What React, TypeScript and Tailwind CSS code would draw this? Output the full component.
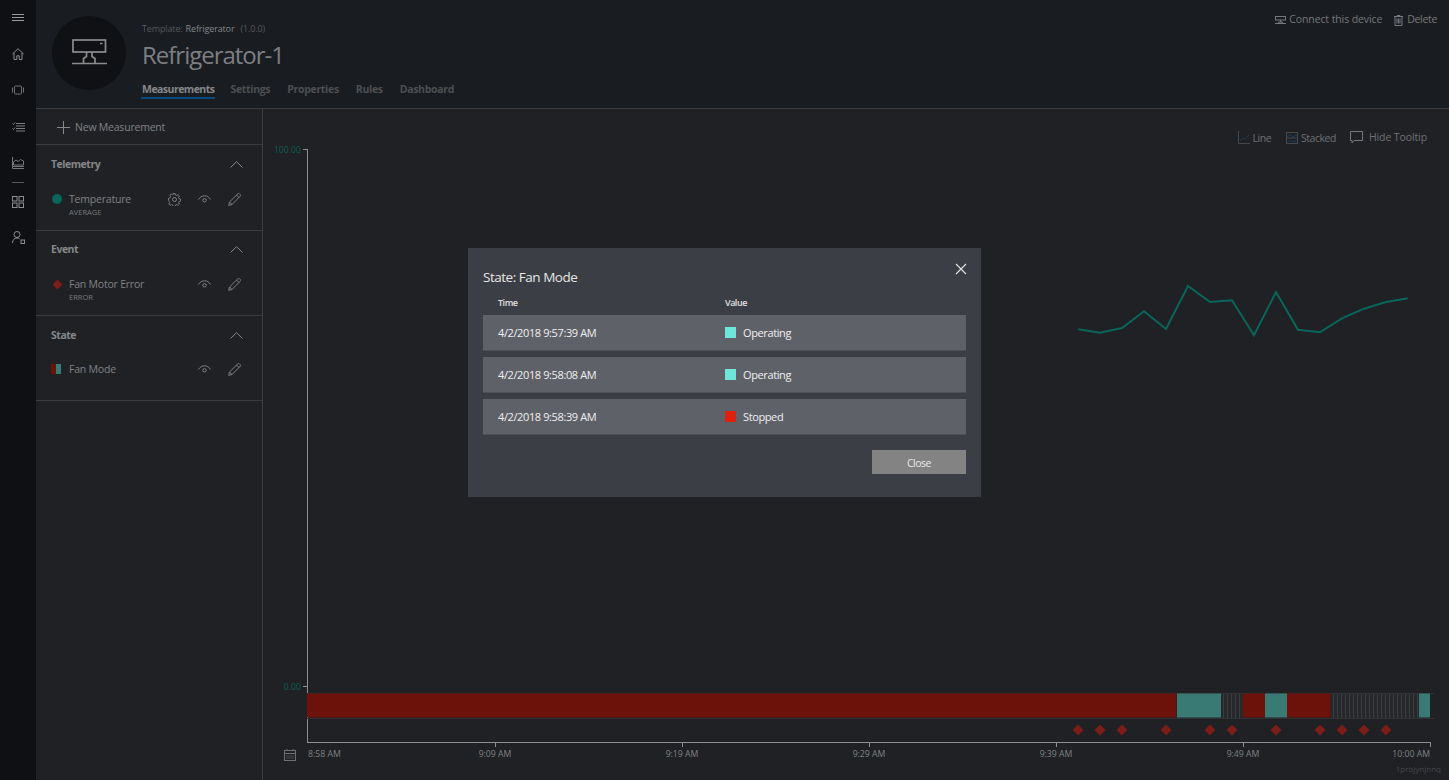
import React from "react";

const font = { fontFamily: '"Open Sans", "Noto Sans", sans-serif' };

function I({ children, w = 16, h = 16, vb, color = "#8b8d90", sw = 1 }: { children: React.ReactNode; w?: number; h?: number; vb?: string; color?: string; sw?: number }) {
  return (
    <svg width={w} height={h} viewBox={vb ?? `0 0 ${w} ${h}`} fill="none" stroke={color} strokeWidth={sw} className="shrink-0">
      {children}
    </svg>
  );
}

const Hamburger = () => <I w={12} h={8} color="#9a9a9a"><path d="M0 .5h12M0 3.5h12M0 6.5h12" /></I>;
const Home = () => <I w={12} h={12}><path d="M.5 6 6 .7 11.5 6M2 5v6.5h2.800V7.800h2.400v3.700H10V5" /></I>;
const Device = () => <I w={12} h={10} color="#6f7174"><rect x="2.5" y="1" width="7" height="8" rx="1" /><path d="M.5 2.5v5M11.5 2.500v5" /></I>;
const Tasks = () => <I w={13} h={10} color="#7b7d80"><path d="M4 1.5h9M4 4h9M4 6.5h9M4 9h9M.5 1.500l1 1 1.500-2M.5 6.500l1 1 1.500-2" /></I>;
const ChartI = () => <I w={12} h={12} color="#75777a"><path d="M.5 0v11.500H12M.5 9.500H12" /><path d="M1.5 8V5l2.500-2 2 1.500L8.500 2.500 11.500 4v4z" /></I>;
const Grid = () => <I w={12} h={12}><rect x=".5" y=".5" width="4.500" height="4.500" /><rect x="7" y=".5" width="4.500" height="4.500" /><rect x=".5" y="7" width="4.500" height="4.500" /><rect x="7" y="7" width="4.500" height="4.500" /></I>;
const User = () => <I w={13} h={13}><circle cx="5" cy="3.500" r="3" /><path d="M.5 12c0-3 2-5 4.500-5 1 0 1.700.2 2.500.8" /><rect x="9" y="9" width="3.500" height="3.500" /></I>;

const BigDevice = () => (
  <I w={36} h={28} color="#8c8c8c" sw={1.7}>
    <rect x="2" y="1" width="32.500" height="12" />
    <path d="M29 4.500h2.500M15.500 13v4.500l-3 2v5M21 13v4.500l3 2v5M1 24.500h35" />
  </I>
);
const SmallDevice = () => <I w={11} h={9} color="#77797c"><rect x=".5" y=".5" width="10" height="3.500" /><path d="M5.500 4v2M3.500 8V6h4v2M0 7.500h11" /></I>;
const Trash = () => <I w={9} h={11} color="#77797c"><path d="M0 1.500h9M3 1.500V.5h3v1M1 1.500v9h7v-9M3 3.500v5M4.500 3.500v5M6 3.500v5" /></I>;
const Plus = () => <I w={13} h={13} color="#85878a"><path d="M6.500 0v13M0 6.500h13" /></I>;
const Chevron = () => <I w={13} h={7} color="#85878a"><path d="M.5 6.500 6.500.7l6 5.800" /></I>;
const Eye = () => <I w={13} h={8} color="#7f8184"><path d="M.5 4.500C2 2 4 .8 6.500.8s4.500 1.200 6 3.700" /><circle cx="6.500" cy="5.300" r="1.700" /></I>;
const Pencil = () => <I w={13} h={13} color="#7f8184"><path d="M.7 12.300 1.500 9 9.800.8c.6-.5 1.200-.5 1.700 0l.7.7c.5.500.5 1.100 0 1.700L4 11.500zM1.500 9 4 11.500M8.500 2l2.500 2.500" /></I>;
const Gear = () => (
  <I w={13} h={13} color="#7f8184">
    <circle cx="6.500" cy="6.500" r="2" />
    <path d="M5.500.5h2l.4 1.700 1.400.6 1.500-.9 1.400 1.400-.9 1.500.6 1.400 1.600.4v2l-1.600.4-.6 1.400.9 1.500-1.400 1.400-1.500-.9-1.400.6-.4 1.600h-2l-.4-1.600-1.400-.6-1.500.9-1.400-1.400.9-1.500-.6-1.400L.5 7.600v-2l1.600-.4.6-1.400-.9-1.500 1.400-1.400 1.500.9 1.400-.6z" transform="scale(.93) translate(.1 0)" />
  </I>
);

function Item({ marker, name, sub, gear }: { marker: React.ReactNode; name: string; sub?: string; gear?: boolean }) {
  return (
    <div className="flex items-start pl-[15px] pr-[21px]">
      <div className="flex h-[16px] w-[18px] shrink-0 items-center">{marker}</div>
      <div className="flex-1">
        <div className="text-[10.5px] leading-[16px] tracking-[-0.02em] text-[#808285]">{name}</div>
        {sub && <div className="text-[7.5px] leading-[10px] tracking-normal text-[#77797c]">{sub}</div>}
      </div>
      <div className="flex h-[16px] items-center">
        {gear && <div className="mr-[17px]"><Gear /></div>}
        <div className="mr-[17px]"><Eye /></div>
        <Pencil />
      </div>
    </div>
  );
}

function Section({ title, children, h, headH, gap }: { title: string; children: React.ReactNode; h: string; headH: string; gap: string }) {
  return (
    <div className={`${h} border-b border-[#3a3c40]`}>
      <div className={`flex items-center justify-between pl-[15px] pr-[19px] ${headH}`}>
        <span className="text-[10.5px] font-bold text-[#85878a]">{title}</span>
        <span className="mb-[2px]"><Chevron /></span>
      </div>
      <div className={gap}>{children}</div>
    </div>
  );
}

const rows: [string, string, string][] = [
  ["4/2/2018 9:57:39 AM", "Operating", "#6ee7da"],
  ["4/2/2018 9:58:08 AM", "Operating", "#6ee7da"],
  ["4/2/2018 9:58:39 AM", "Stopped", "#e02110"],
];

const linePts = "1078.300,329.300 1100,332.700 1122,328 1144,311.300 1166,329 1188,286 1210,302 1232,300.300 1254,335.300 1276,292 1298,329.700 1320,332.300 1342,318.300 1364,308.700 1386,302 1407.700,298.300";
const diamonds = [1078, 1100, 1122, 1166, 1210, 1232, 1276, 1320, 1342, 1364, 1386];
const segs: [number, number, string][] = [
  [307, 1176.500, "#6c120a"],
  [1177, 1221, "#3a7a74"],
  [1243, 1265, "#6c120a"],
  [1265, 1287, "#3a7a74"],
  [1287, 1330.500, "#6c120a"],
  [1419, 1430, "#3a7a74"],
];
const stripes = [[1221, 1243], [1331, 1419]] as const;
const xTicks: [number, string, "start" | "middle" | "end"][] = [
  [308, "8:58 AM", "start"],
  [495, "9:09 AM", "middle"],
  [682, "9:19 AM", "middle"],
  [869, "9:29 AM", "middle"],
  [1056, "9:39 AM", "middle"],
  [1243, "9:49 AM", "middle"],
  [1430, "10:00 AM", "end"],
];

function Chart() {
  const lines: number[] = [];
  for (const [a, b] of stripes) for (let x = a + 2; x < b; x += 4) lines.push(x);
  return (
    <svg className="absolute left-0 top-0 tracking-normal" width="1186" height="671" viewBox="263 109 1186 671" style={font}>
      <g stroke="#8e8e8e" strokeWidth="1">
        <path d="M307.500 149v594M303 149.500h4M303 686.500h4M307 742.500h1124" />
        {xTicks.slice(1).map(([x]) => <path key={x} d={`M${x + 0.5} 743v4`} />)}
      </g>
      <text x="301" y="153" textAnchor="end" fontSize="8.700" fill="#0c5f52">100.00</text>
      <text x="301" y="690" textAnchor="end" fontSize="8.700" fill="#0c5f52">0.00</text>
      <polyline points={linePts} fill="none" stroke="#08665a" strokeWidth="2" />
      <path d="M307 693.500h1127M307 718.500h1127" stroke="#2f3134" strokeWidth="1" />
      {stripes.map(([a, b]) => <rect key={a} x={a} y="694" width={b - a} height="24" fill="#26282b" />)}
      {lines.map((x) => <path key={x} d={`M${x + 0.5} 694v24`} stroke="#393b3e" strokeWidth="1" />)}
      {segs.map(([a, b, c]) => <rect key={a} x={a} y="693.500" width={b - a} height="24" fill={c} />)}
      {diamonds.map((x) => <path key={x} d={`M${x} 724.500l5.500 5.500-5.500 5.500-5.500-5.500z`} fill="#7b1d19" />)}
      {xTicks.map(([x, t, a]) => <text key={t} x={x} y="757" textAnchor={a} fontSize="8.700" fill="#7f8184">{t}</text>)}
      <text x="1441" y="772" textAnchor="end" fontSize="8" fill="#45474a">1prbjynjnnq</text>
      <g stroke="#6f7174" fill="none">
        <rect x="284.500" y="750.500" width="11" height="10" />
        <path d="M284.500 753.500h11M287 749v2M293 749v2" />
        <path d="M286.500 756h7M286.500 758h7" strokeDasharray="1 1" />
      </g>
    </svg>
  );
}

export default function App() {
  return (
    <div className="relative flex h-[780px] w-[1449px] overflow-hidden bg-[#1f2125] tracking-[-0.03em]" style={font}>
      <nav className="flex w-[36px] shrink-0 flex-col items-center bg-[#0e1013]">
        <div className="mt-[14px]"><Hamburger /></div>
        <div className="mt-[26px]"><Home /></div>
        <div className="mt-[25px]"><Device /></div>
        <div className="mt-[27px]"><Tasks /></div>
        <div className="mt-[25px]"><ChartI /></div>
        <div className="mt-[13px] h-px w-[12px] bg-[#55575a]" />
        <div className="mt-[13px]"><Grid /></div>
        <div className="mt-[23px]"><User /></div>
      </nav>
      <div className="flex min-w-0 flex-1 flex-col">
        <header className="relative flex h-[109px] shrink-0 border-b border-[#3a3c40] bg-[#191c21]">
          <div className="ml-[16px] mt-[16px] flex h-[74px] w-[74px] items-center justify-center rounded-full bg-[#0f1114]">
            <BigDevice />
          </div>
          <div className="ml-[16px] flex-1">
            <div className="mt-[23px] flex text-[9px] leading-[12px] tracking-[-0.015em] text-[#55575a]">
              <span>Template:</span>
              <span className="ml-[3px] text-[#85878a]">Refrigerator</span>
              <span className="ml-[6px]">(1.0.0)</span>
            </div>
            <div className="mt-[4px] text-[24px] leading-[32px] tracking-[-0.042em] text-[#7d7f82]">Refrigerator-1</div>
            <div className="-ml-[1px] mt-[10px] flex text-[10.5px] font-bold leading-[16px] tracking-[-0.03em] text-[#4d4f52]">
              <span className="h-[18px] border-b-2 border-[#0b4a80] px-px tracking-[-0.05em] text-[#85878a]">Measurements</span>
              <span className="ml-[15px]">Settings</span>
              <span className="ml-[17px]">Properties</span>
              <span className="ml-[17px]">Rules</span>
              <span className="ml-[17px]">Dashboard</span>
            </div>
          </div>
          <div className="mr-[12px] mt-[13px] flex h-[14px] items-center text-[10.5px] tracking-[-0.01em] text-[#77797c]">
            <SmallDevice />
            <span className="ml-[3px]">Connect this device</span>
            <span className="ml-[12px]"><Trash /></span>
            <span className="ml-[4px] tracking-[-0.03em]">Delete</span>
          </div>
        </header>
        <div className="flex min-h-0 flex-1">
          <aside className="w-[227px] shrink-0 border-r border-[#3a3c40]">
            <div className="flex h-[36px] items-center border-b border-[#3a3c40] pl-[21px] pt-[1px] text-[10.5px] tracking-[-0.02em] text-[#808285]">
              <Plus />
              <span className="ml-[5px] mt-[1px]">New Measurement</span>
            </div>
            <Section title="Telemetry" h="h-[86px]" headH="h-[40px]" gap="mt-[6px]">
              <Item gear marker={<span className="ml-[1px] block h-[10px] w-[10px] rounded-full bg-[#08665a]" />} name="Temperature" sub="AVERAGE" />
            </Section>
            <Section title="Event" h="h-[85px]" headH="h-[38px]" gap="mt-[7px]">
              <Item marker={<span className="ml-[3px] block h-[7px] w-[7px] rotate-45 bg-[#7b1d19]" />} name="Fan Motor Error" sub="ERROR" />
            </Section>
            <Section title="State" h="h-[85px]" headH="h-[40px]" gap="mt-[5px]">
              <Item marker={<span className="flex h-[10px] w-[10px]"><span className="w-1/2 bg-[#6c120a]" /><span className="w-1/2 bg-[#3a7a74]" /></span>} name="Fan Mode" />
            </Section>
          </aside>
          <main className="relative min-w-0 flex-1">
            <Chart />
            <div className="relative flex justify-end pr-[22px] pt-[20px] text-[10.5px] text-[#6f7174]">
              <div className="flex items-center">
                <I w={12} h={13} color="#44494e"><path d="M.5 0v12.500H12" /><path d="M2 10l3-3 1.500 1L11 4" stroke="#1d3c58" /></I>
                <span className="ml-[3px] mt-[2px]">Line</span>
              </div>
              <div className="ml-[15px] flex items-center">
                <I w={12} h={12} color="#44494e"><rect x=".5" y=".5" width="11" height="11" /><path d="M.5 6h11" /><path d="M1 4.500l3-1.500 3 1.500 4-1.500M1 10l3-1.500 3 1.500 4-1.500" stroke="#1d3c58" /></I>
                <span className="ml-[3px] mt-[2px]">Stacked</span>
              </div>
              <div className="ml-[14px] flex items-center">
                <I w={13} h={13} color="#77797c"><path d="M.5.5h12v9H4L2 12V9.500H.5z" /></I>
                <span className="ml-[6px] tracking-[-0.01em]">Hide Tooltip</span>
              </div>
            </div>
          </main>
        </div>
      </div>

      <div className="absolute left-[468px] top-[248px] flex h-[249px] w-[513px] flex-col bg-[#3b3e45] px-[15px]">
        <div className="absolute right-[14px] top-[15px]">
          <I w={12} h={12} color="#e0e0e0" sw={1.2}><path d="M1 1l10 10M11 1 1 11" /></I>
        </div>
        <div className="mt-[19px] text-[13.500px] leading-[20px] text-[#e6e6e6]">State: Fan Mode</div>
        <div className="mt-[3px] flex h-[25px] items-center text-[9px] font-semibold text-[#e0e0e0]">
          <span className="ml-[15px] w-[227px]">Time</span>
          <span>Value</span>
        </div>
        <div className="flex flex-col gap-[6px]">
          {rows.map(([t, v, c]) => (
            <div key={t} className="flex h-[36px] items-center border-b border-[#4d5057] bg-[#5f6169] text-[11px] tracking-[-0.035em] text-[#f0f0f0]">
              <span className="ml-[15px] mt-[1px] w-[227px]">{t}</span>
              <span className="h-[11px] w-[11px]" style={{ backgroundColor: c }} />
              <span className="ml-[7px] mt-[1px]">{v}</span>
            </div>
          ))}
        </div>
        <div className="mt-[15px] flex justify-end">
          <div className="flex h-[24px] w-[94px] items-center justify-center bg-[#838383] pt-[3px] text-[10.500px] text-[#e8e8e8]">Close</div>
        </div>
      </div>
    </div>
  );
}
